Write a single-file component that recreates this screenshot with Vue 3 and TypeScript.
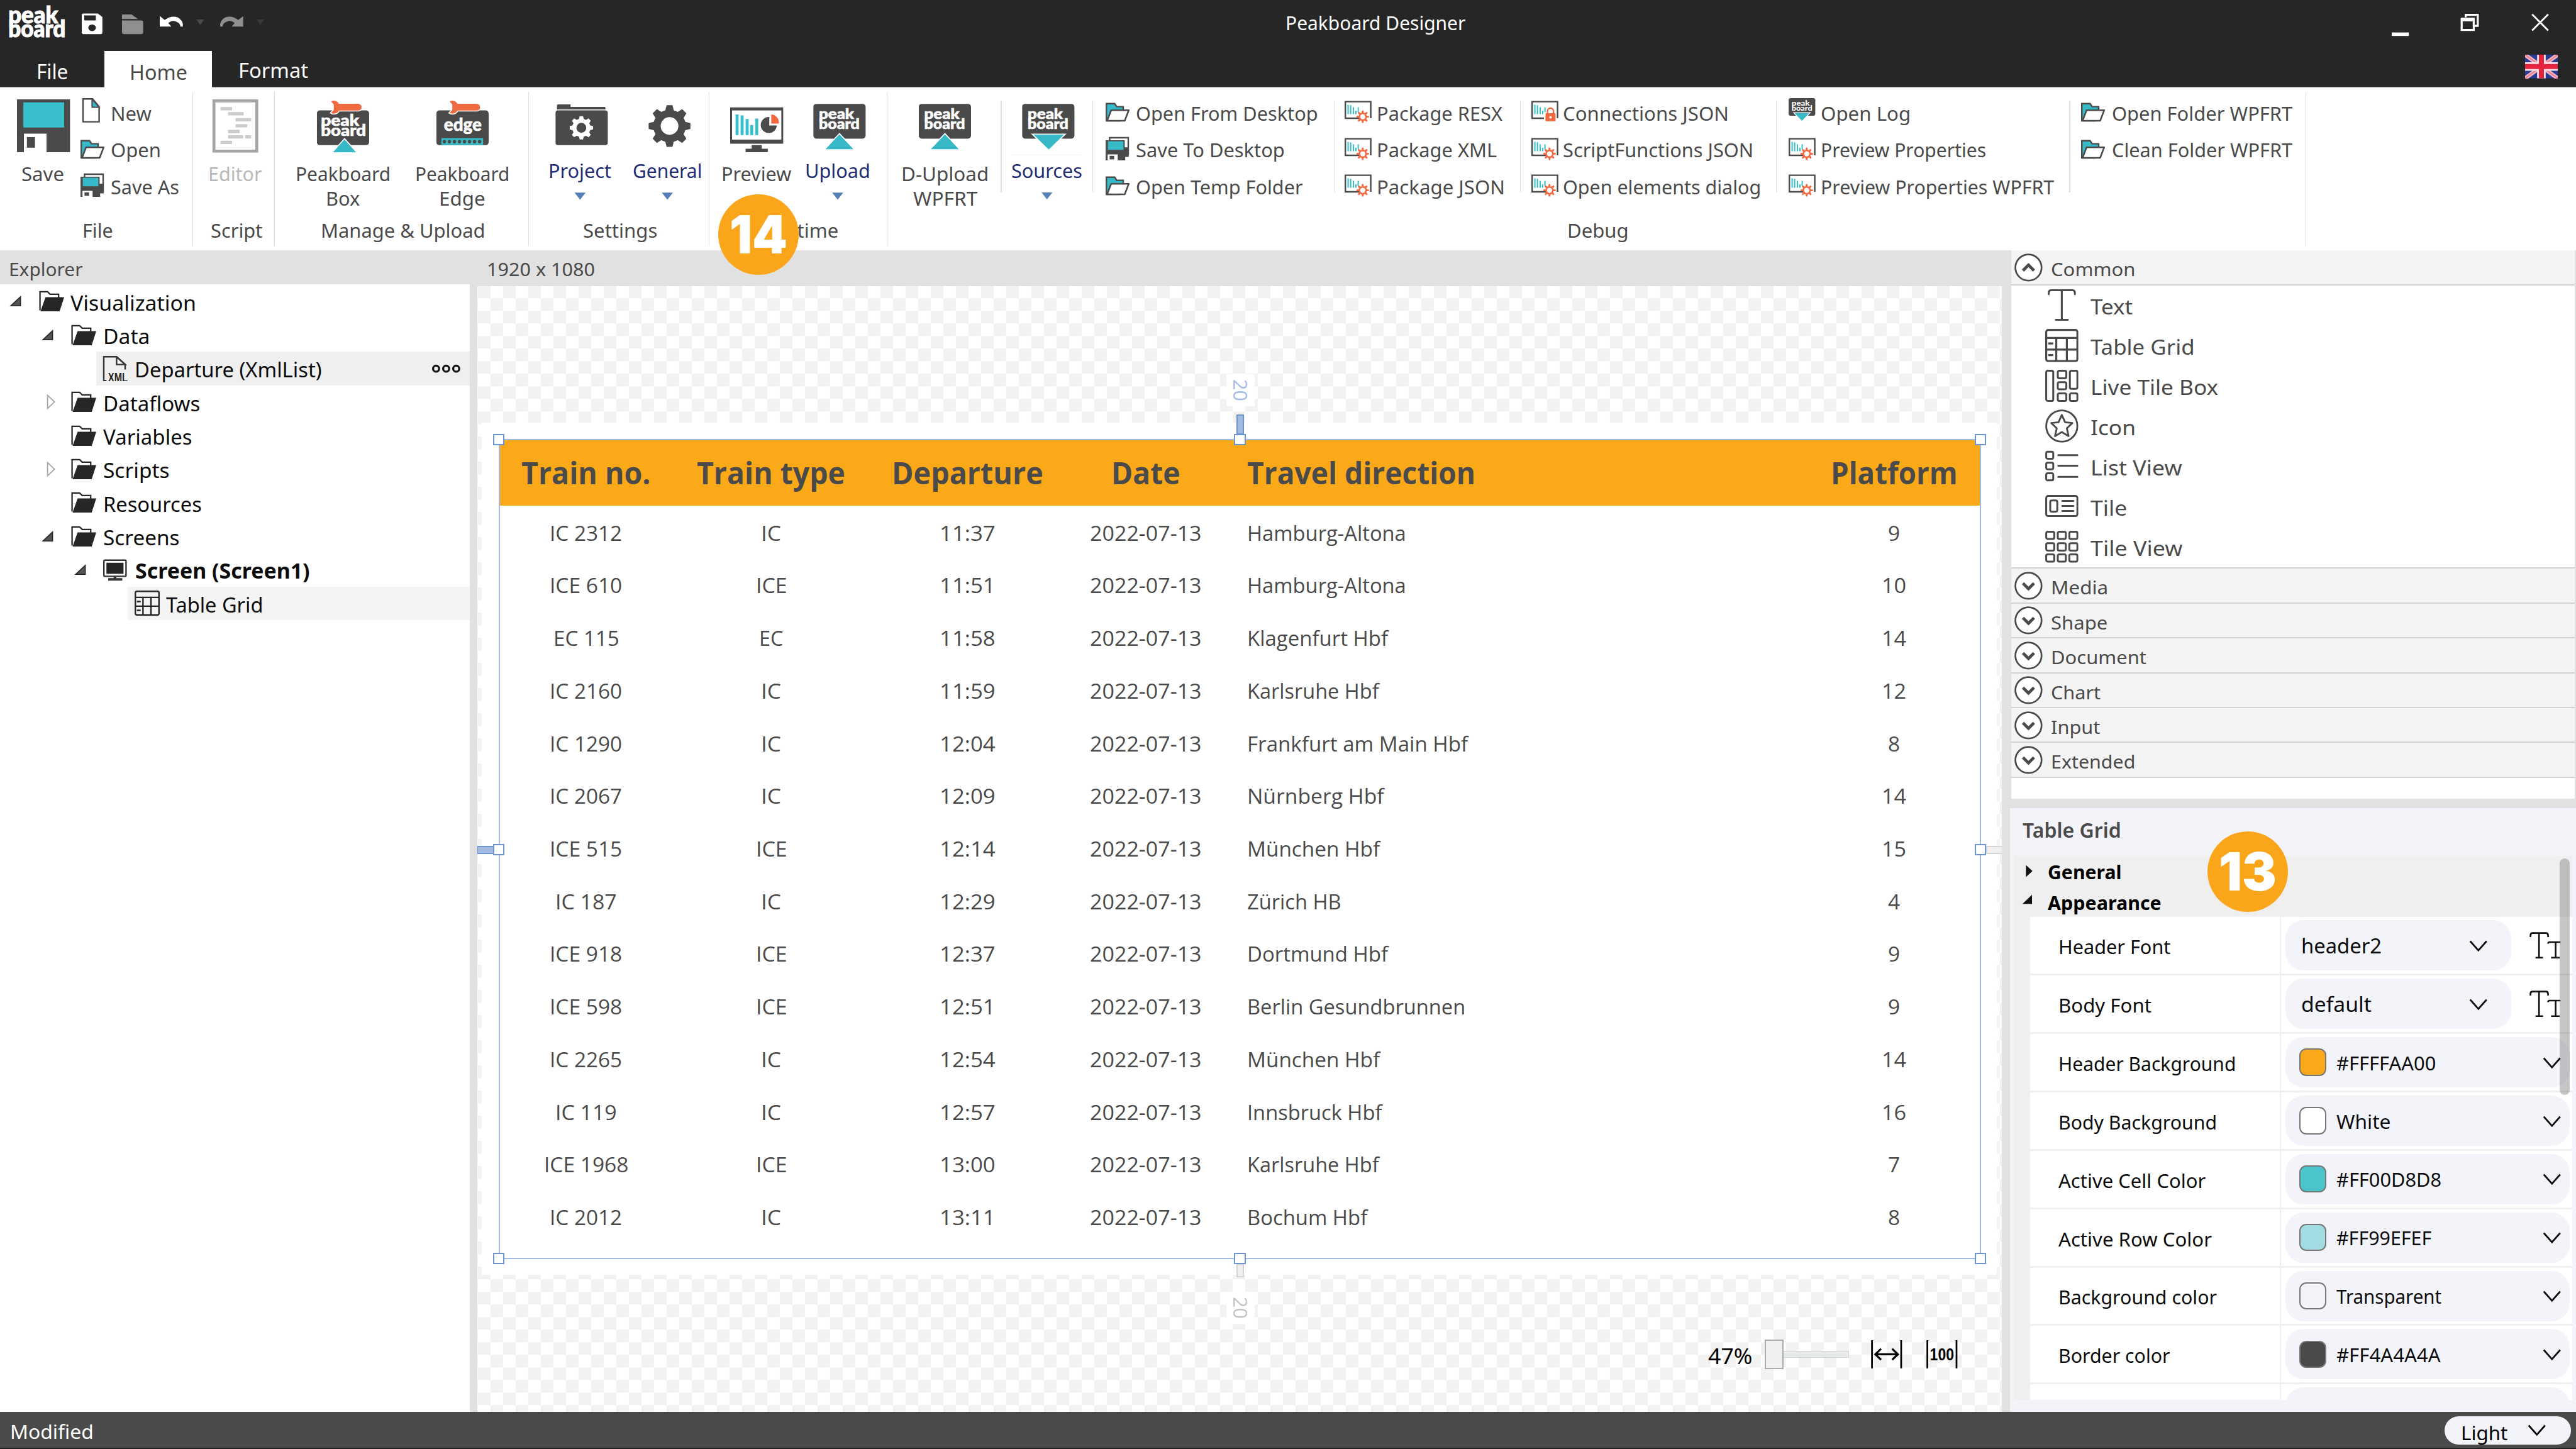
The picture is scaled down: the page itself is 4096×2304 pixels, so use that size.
<script setup lang="ts">
interface SmallItem { icon: string; text: string; w: number }
interface SmallColumn { left: number; width: number; gap: number; items: SmallItem[] }
interface TreeNode { indent: number; toggle: '' | 'open' | 'closed'; icon: string; text: string; w: number; bold?: boolean; shade?: string }
interface Prop { label: string; lw: number; value: string; vw: number; swatch?: string }

const vFit = {
  mounted(el: HTMLElement, binding: { value: number }) {
    el.style.width = 'max-content'
    const natural = el.getBoundingClientRect().width
    el.style.width = `${binding.value + 5}px`
    const target = el.getBoundingClientRect().width
    el.style.transform = `scaleX(${target / natural})`
  },
}

const fileItems: SmallItem[] = [
  { icon: 'new', text: 'New', w: 76 },
  { icon: 'folder', text: 'Open', w: 95 },
  { icon: 'saveas', text: 'Save As', w: 131 },
]

const debugColumns: SmallColumn[] = [
  { left: 24, width: 455, gap: 3, items: [
    { icon: 'folder', text: 'Open From Desktop', w: 357 },
    { icon: 'saveas', text: 'Save To Desktop', w: 291 },
    { icon: 'folder', text: 'Open Temp Folder', w: 327 },
  ] },
  { left: 18, width: 349, gap: 7, items: [
    { icon: 'package', text: 'Package RESX', w: 245 },
    { icon: 'package', text: 'Package XML', w: 234 },
    { icon: 'package', text: 'Package JSON', w: 250 },
  ] },
  { left: 21, width: 486, gap: 5, items: [
    { icon: 'lock', text: 'Connections JSON', w: 325 },
    { icon: 'package', text: 'ScriptFunctions JSON', w: 374 },
    { icon: 'package', text: 'Open elements dialog', w: 389 },
  ] },
  { left: 23, width: 558, gap: 6, items: [
    { icon: 'log', text: 'Open Log', w: 174 },
    { icon: 'package', text: 'Preview Properties', w: 324 },
    { icon: 'package', text: 'Preview Properties WPFRT', w: 459 },
  ] },
  { left: 22, width: 440, gap: 3, items: [
    { icon: 'folder', text: 'Open Folder WPFRT', w: 354 },
    { icon: 'folder', text: 'Clean Folder WPFRT', w: 354 },
  ] },
]

const tree: TreeNode[] = [
  { indent: 14, toggle: 'open', icon: 'treefolder', text: 'Visualization', w: 245 },
  { indent: 78, toggle: 'open', icon: 'treefolder', text: 'Data', w: 88 },
  { indent: 142, toggle: '', icon: 'xml', text: 'Departure (XmlList)', w: 367, shade: '#efefef' },
  { indent: 78, toggle: 'closed', icon: 'treefolder', text: 'Dataflows', w: 188 },
  { indent: 78, toggle: '', icon: 'treefolder', text: 'Variables', w: 172 },
  { indent: 78, toggle: 'closed', icon: 'treefolder', text: 'Scripts', w: 127 },
  { indent: 78, toggle: '', icon: 'treefolder', text: 'Resources', w: 191 },
  { indent: 78, toggle: 'open', icon: 'treefolder', text: 'Screens', w: 147 },
  { indent: 142, toggle: 'open', icon: 'monitor', text: 'Screen (Screen1)', w: 342, bold: true },
  { indent: 205, toggle: '', icon: 'grid', text: 'Table Grid', w: 188, shade: '#f4f4f4' },
]

const headers: [string, number][] = [
  ['Train no.', 252], ['Train type', 290], ['Departure', 296], ['Date', 132], ['Travel direction', 449], ['Platform', 247],
]

type Cell = [string, number]
const trips: [Cell, Cell, string, Cell, string][] = [
  [['IC 2312', 139], ['IC', 35], '11:37', ['Hamburg-Altona', 311], '9'],
  [['ICE 610', 139], ['ICE', 57], '11:51', ['Hamburg-Altona', 311], '10'],
  [['EC 115', 126], ['EC', 43], '11:58', ['Klagenfurt Hbf', 275], '14'],
  [['IC 2160', 139], ['IC', 35], '11:59', ['Karlsruhe Hbf', 257], '12'],
  [['IC 1290', 139], ['IC', 35], '12:04', ['Frankfurt am Main Hbf', 434], '8'],
  [['IC 2067', 139], ['IC', 35], '12:09', ['Nürnberg Hbf', 267], '14'],
  [['ICE 515', 139], ['ICE', 57], '12:14', ['München Hbf', 259], '15'],
  [['IC 187', 117], ['IC', 35], '12:29', ['Zürich HB', 182], '4'],
  [['ICE 918', 139], ['ICE', 57], '12:37', ['Dortmund Hbf', 275], '9'],
  [['ICE 598', 139], ['ICE', 57], '12:51', ['Berlin Gesundbrunnen', 429], '9'],
  [['IC 2265', 139], ['IC', 35], '12:54', ['München Hbf', 259], '14'],
  [['IC 119', 117], ['IC', 35], '12:57', ['Innsbruck Hbf', 263], '16'],
  [['ICE 1968', 163], ['ICE', 57], '13:00', ['Karlsruhe Hbf', 257], '7'],
  [['IC 2012', 139], ['IC', 35], '13:11', ['Bochum Hbf', 234], '8'],
]

const controls: SmallItem[] = [
  { icon: 'text', text: 'Text', w: 79 },
  { icon: 'grid', text: 'Table Grid', w: 202 },
  { icon: 'livetile', text: 'Live Tile Box', w: 249 },
  { icon: 'star', text: 'Icon', w: 85 },
  { icon: 'listview', text: 'List View', w: 177 },
  { icon: 'tile', text: 'Tile', w: 68 },
  { icon: 'tileview', text: 'Tile View', w: 178 },
]

const sections: [string, number][] = [
  ['Media', 109], ['Shape', 108], ['Document', 185], ['Chart', 94], ['Input', 93], ['Extended', 163],
]

const props: Prop[] = [
  { label: 'Header Font', lw: 218, value: 'header2', vw: 155 },
  { label: 'Body Font', lw: 180, value: 'default', vw: 135 },
  { label: 'Header Background', lw: 348, value: '#FFFFAA00', vw: 193, swatch: '#fba919' },
  { label: 'Body Background', lw: 310, value: 'White', vw: 103, swatch: '#ffffff' },
  { label: 'Active Cell Color', lw: 288, value: '#FF00D8D8', vw: 204, swatch: '#4bc4cb' },
  { label: 'Active Row Color', lw: 300, value: '#FF99EFEF', vw: 184, swatch: '#a2dbe2' },
  { label: 'Background color', lw: 310, value: 'Transparent', vw: 204, swatch: 'transparent' },
  { label: 'Border color', lw: 217, value: '#FF4A4A4A', vw: 202, swatch: '#4a4a4a' },
]

const handles = ['tl', 'tm', 'tr', 'ml', 'mr', 'bl', 'bm', 'br']
const angles = [0, 45, 90, 135, 180, 225, 270, 315]
</script>

<template>
  <div class="app">
    <svg class="defs" width="0" height="0">
      <symbol id="gear" viewBox="-43 -43 86 86">
        <circle r="25.5" fill="none" stroke="currentColor" stroke-width="15" />
        <path v-for="a in angles" :key="a" d="M-9-30L-6-42.500H6L9-30Z" fill="currentColor" :transform="`rotate(${a})`" />
      </symbol>
      <symbol id="smallgear" viewBox="-13 -13 26 26">
        <circle r="6.700" fill="#fff" stroke="#f4683f" stroke-width="3" />
        <path v-for="a in angles" :key="a" d="M-2.200-7.500L-1.500-12.500H1.500L2.200-7.500Z" fill="#f4683f" :transform="`rotate(${a})`" />
      </symbol>
      <symbol id="wrench" viewBox="0 0 76 32">
        <path d="M8 4C13 0 22 1 26 8H65A8 8 0 0 1 65 24H26C22 31 13 32 8 28L14 21V11Z" fill="#ef6a40" stroke="#fff" stroke-width="2" />
      </symbol>
      <symbol id="chev" viewBox="0 0 38 24">
        <path d="M2 2L19 21L36 2" fill="none" stroke="currentColor" stroke-width="3.600" />
      </symbol>

      <symbol id="big-save" viewBox="0 0 106 106">
        <path d="M0 0H106V105H59V68H14V105H0Z" fill="#4a4a4a" />
        <rect x="13" y="6" width="81" height="50" fill="#37c0cb" /><rect x="20" y="75" width="16" height="21" fill="#4a4a4a" />
      </symbol>
      <symbol id="big-editor" viewBox="0 0 106 106">
        <rect x="10.500" y="3" width="85" height="100" fill="#fff" stroke="#a6a6a6" stroke-width="6" />
        <path d="M23.500 18.500H46.500M38.500 28.500H69.500M53.500 40.500H84.500M53.500 52.500H76.500M38.500 64H61.500M38.500 74.500H68.500M72.500 74.500H84.500M23.500 85.500H46.500" stroke="#cbcbcb" stroke-width="6.500" />
      </symbol>
      <symbol id="big-box" viewBox="0 0 106 106">
        <rect y="22" width="104" height="69" rx="6" fill="#4a4a4a" />
        <use href="#wrench" x="18" y="0" width="76" height="31" />
        <g fill="#fff" stroke="#fff" stroke-width=".8" font-family="Lato, sans-serif" font-weight="900" font-size="30">
          <text x="8" y="52" textLength="76" lengthAdjust="spacingAndGlyphs">peak</text>
          <text x="8" y="73" textLength="90" lengthAdjust="spacingAndGlyphs">board</text>
        </g>
        <path d="M55 78L80 106H30Z" fill="#37b9c8" stroke="#fff" stroke-width="2" />
      </symbol>
      <symbol id="big-edge" viewBox="0 0 106 106">
        <rect y="22" width="104" height="69" rx="6" fill="#4a4a4a" />
        <use href="#wrench" x="16" y="0" width="76" height="31" />
        <text x="15" y="62" textLength="75" lengthAdjust="spacingAndGlyphs" fill="#fff" stroke="#fff" stroke-width=".8" font-family="Lato, sans-serif" font-weight="900" font-size="36">edge</text>
        <rect x="10" y="77" width="83" height="14" fill="#37b9c8" />
        <path d="M16 84H90" stroke="#4a4a4a" stroke-width="7" stroke-dasharray="0 10" stroke-linecap="round" />
      </symbol>
      <symbol id="big-project" viewBox="0 0 106 106">
        <path d="M3 20V12Q3 10 5 10H30V15H98Q99.500 15 99.500 20Z" fill="#4a4a4a" />
        <rect y="22" width="104" height="69" rx="5" fill="#4a4a4a" />
        <use href="#gear" x="28" y="33" width="47" height="47" color="#fff" />
      </symbol>
      <symbol id="big-general" viewBox="0 0 106 106">
        <use href="#gear" x="11" y="11" width="84" height="84" color="#4a4a4a" />
      </symbol>
      <symbol id="big-preview" viewBox="0 0 106 106">
        <path d="M0 16H106V88H0Z" fill="#4a4a4a" /><rect x="4" y="22" width="98" height="58" fill="#fff" />
        <path d="M43 91H63V98H75V105H31V98H43Z" fill="#4a4a4a" />
        <path d="M14 30V71M24 32V71M34 39V71M43 51V71M53 38V71" stroke="#37c0cb" stroke-width="6" />
        <path d="M78 35V52H93A16 16 0 1 1 78 35Z" fill="#4a4a4a" /><path d="M82 30A15.500 16 0 0 1 97 48H82Z" fill="#f4683f" />
      </symbol>
      <symbol id="plate" viewBox="0 0 106 106">
        <rect y="9" width="104" height="69" rx="6" fill="#4a4a4a" />
        <g fill="#fff" stroke="#fff" stroke-width=".8" font-family="Lato, sans-serif" font-weight="900" font-size="29">
          <text x="11" y="39" textLength="70" lengthAdjust="spacingAndGlyphs">peak</text>
          <text x="11" y="59" textLength="81" lengthAdjust="spacingAndGlyphs">board</text>
        </g>
      </symbol>
      <symbol id="big-upload" viewBox="0 0 106 106">
        <use href="#plate" width="106" height="106" /><path d="M52 68L82 100H22Z" fill="#37b9c8" stroke="#fff" stroke-width="2" />
      </symbol>
      <symbol id="big-sources" viewBox="0 0 106 106">
        <use href="#plate" width="106" height="106" /><path d="M20 69H86L53 101Z" fill="#37b9c8" stroke="#fff" stroke-width="2" />
      </symbol>

      <symbol id="sm-new" viewBox="0 0 56 56">
        <path d="M5 1.500H24L37 17V47H5Z" fill="#fff" stroke="#4a4a4a" stroke-width="3" /><path d="M23 2V18H37Z" fill="#37b9c8" stroke="#4a4a4a" stroke-width="2.500" />
      </symbol>
      <symbol id="sm-folder" viewBox="0 0 56 56">
        <path d="M1.500 45V11H18L22 17H35V27L28 45Z" fill="#37b9c8" stroke="#4a4a4a" stroke-width="3" />
        <path d="M11 24H46L38 45H3Z" fill="#fff" stroke="#4a4a4a" stroke-width="3.200" stroke-linejoin="round" />
      </symbol>
      <symbol id="sm-saveas" viewBox="0 0 56 56">
        <path d="M8 14V5H45V38H38" fill="#fff" stroke="#4a4a4a" stroke-width="3" />
        <path d="M0 10H38V24H46V43H39V50H24V38H4V50H0Z" fill="#4a4a4a" /><rect x="4.500" y="12" width="31" height="17" fill="#37b9c8" /><rect x="8" y="41" width="9" height="7" fill="#4a4a4a" />
      </symbol>
      <symbol id="frame" viewBox="0 0 56 56">
        <path d="M34 40H1.500V7H52V40" fill="#fff" stroke="#4a4a4a" stroke-width="3" />
        <path d="M7 13V32M12 14V32M17.500 18V32M22.500 25V32M27 18V28" stroke="#37c0cb" stroke-width="2.600" />
      </symbol>
      <symbol id="sm-package" viewBox="0 0 56 56">
        <use href="#frame" width="56" height="56" /><use href="#smallgear" x="23" y="24" width="26" height="26" />
      </symbol>
      <symbol id="sm-lock" viewBox="0 0 56 56">
        <use href="#frame" width="56" height="56" /><rect x="25" y="28" width="25" height="19" fill="#fff" />
        <path d="M32 31V26A6 6 0 0 1 44 26V31" fill="none" stroke="#ef6a40" stroke-width="3" /><rect x="28" y="30" width="20" height="16" rx="2" fill="#ef6a40" /><circle cx="38" cy="38" r="2.500" fill="#fff" />
      </symbol>
      <symbol id="sm-log" viewBox="0 0 56 56">
        <rect y="0" width="53" height="35" rx="4" fill="#4a4a4a" />
        <g fill="#fff" font-family="Lato, sans-serif" font-weight="900" font-size="14">
          <text x="6" y="15" textLength="36" lengthAdjust="spacingAndGlyphs">peak</text><text x="6" y="25" textLength="41" lengthAdjust="spacingAndGlyphs">board</text>
        </g>
        <path d="M10 29H43L26.500 46Z" fill="#37b9c8" stroke="#fff" stroke-width="1.500" />
      </symbol>

      <symbol id="tr-treefolder" viewBox="0 0 50 50">
        <path d="M2 43V6H17L22 11H39V18" fill="none" stroke="#262626" stroke-width="2.800" /><path d="M13 17H50L41 45H3Z" fill="#262626" />
      </symbol>
      <symbol id="tr-xml" viewBox="0 0 50 50">
        <path d="M8 49H2.500V1.500H28L45 17V27" fill="none" stroke="#333" stroke-width="3" /><path d="M28 2V17H45Z" fill="#fff" stroke="#333" stroke-width="3" />
        <text x="11" y="51" textLength="39" lengthAdjust="spacingAndGlyphs" fill="#262626" font-family="'Liberation Sans', sans-serif" font-weight="700" font-size="26">XML</text>
      </symbol>
      <symbol id="tr-monitor" viewBox="0 0 50 50">
        <rect x="1.500" y="6" width="44" height="32" rx="2" fill="none" stroke="#333" stroke-width="3" /><rect x="6.500" y="11" width="34" height="22" fill="#262626" />
        <path d="M23.500 38V42M10 44H38" stroke="#333" stroke-width="5" />
      </symbol>
      <symbol id="tr-grid" viewBox="0 0 66 66">
        <g fill="none" stroke="currentColor" stroke-width="4"><rect x="2" y="2" width="62" height="62" rx="4" /><path d="M2 18H64M2 41H64M22 18V64M43 18V64M6 29H16M6 52H16" /></g>
      </symbol>
      <symbol id="tr-text" viewBox="0 0 66 66">
        <path d="M7 11V8Q7 3 12 3H54Q59 3 59 8V11M33 3V62M21 62H45" fill="none" stroke="currentColor" stroke-width="3.800" stroke-linecap="round" />
      </symbol>
      <symbol id="tr-livetile" viewBox="0 0 66 66">
        <g fill="none" stroke="currentColor" stroke-width="3.800"><rect x="2" y="3" width="14" height="60" rx="3" /><rect x="25" y="3" width="17" height="15" rx="3" /><rect x="25" y="26" width="17" height="14" rx="3" /><rect x="25" y="48" width="17" height="15" rx="3" /><rect x="49" y="3" width="15" height="36" rx="3" /><rect x="49" y="48" width="15" height="15" rx="3" /></g>
      </symbol>
      <symbol id="tr-star" viewBox="0 0 66 66">
        <g fill="none" stroke="currentColor" stroke-width="3.600" stroke-linejoin="round"><circle cx="33" cy="33" r="31" /><path d="M33 11L39.500 25.500L54 27L43 37.500L46.500 53L33 45L19.500 53L23 37.500L12 27L26.500 25.500Z" /></g>
      </symbol>
      <symbol id="tr-listview" viewBox="0 0 66 66">
        <g fill="none" stroke="currentColor" stroke-width="3.800" stroke-linecap="round"><rect x="2" y="4" width="14" height="14" rx="3" /><rect x="2" y="26" width="14" height="13" rx="3" /><rect x="2" y="47" width="14" height="14" rx="3" /><path d="M26 11H64M26 32H64M26 54H64" /></g>
      </symbol>
      <symbol id="tr-tile" viewBox="0 0 66 66">
        <g fill="none" stroke="currentColor" stroke-width="3.800" stroke-linecap="round"><rect x="2" y="12" width="62" height="40" rx="4" /><rect x="10" y="21" width="14" height="22" rx="3" /><path d="M34 22H56M34 32H56M34 42H56" /></g>
      </symbol>
      <symbol id="tr-tileview" viewBox="0 0 66 66">
        <g fill="none" stroke="currentColor" stroke-width="3.800"><template v-for="y in [3, 26, 48]" :key="y"><rect v-for="x in [2, 25, 48]" :key="x" :x="x" :y="y" width="16" height="14.500" rx="3" /></template></g>
      </symbol>
      <symbol id="fonts" viewBox="0 0 62 54">
        <path d="M2 10V7Q2 2 6 2H33Q37 2 37 7V10M19 2V51M12 51H27M37 23Q37 20 40 20H62M52 20V51M43 51H60" fill="none" stroke="#111" stroke-width="3.300" />
      </symbol>
    </svg>

    <header class="titlebar">
      <svg class="logo" viewBox="0 0 114 66"><g fill="#fff" stroke="#fff" stroke-width="1.400" font-family="Lato, sans-serif" font-weight="900" font-size="48"><text x="-1" y="34" textLength="99" lengthAdjust="spacingAndGlyphs">peak</text><text x="-1" y="61" textLength="114" lengthAdjust="spacingAndGlyphs">board</text></g></svg>
      <svg class="quick" viewBox="0 0 380 50">
        <path fill-rule="evenodd" fill="#fff" d="M3 3H32L41 10V41Q41 44 38 44H3Q0 44 0 41V6Q0 3 3 3ZM5 7V17H28V7ZM20.500 25A7.500 6.500 0 1 0 20.600 25Z" />
        <path fill="#8f8f8f" d="M80 5H99L112 14H80ZM80 17H118Q122 17 122 20V41Q122 44 118 44H84Q80 44 80 41Z" />
        <path fill="#fff" d="M155 8V29H178L172 22Q181 15 189 20Q196 23 196 29H201Q202 17 191 11Q178 6 165 16Z" />
        <path fill="#4a4a4a" d="M228 15H243L235.500 26Z" />
        <path fill="#8f8f8f" d="M321 8V29H298L304 22Q295 15 287 20Q280 23 280 29H275Q274 17 285 11Q298 6 311 16Z" />
        <path fill="#3a3a3a" d="M348 15H362L355 26Z" />
      </svg>
      <div class="title"><span v-fit="353" class="t">Peakboard Designer</span></div>
      <svg class="winbtns" viewBox="0 0 316 60">
        <path d="M0 47H34V54H0Z" fill="#fff" /><g fill="none" stroke="#fff" stroke-width="4"><path d="M147 17V12H171V34H165" /><rect x="139" y="20" width="24" height="22" /><path d="M279 11L311 43M311 11L279 43" stroke-width="3.600" /></g><path d="M139 18H163V25H139Z" fill="#fff" />
      </svg>
    </header>
    <nav class="tabs">
      <span class="tab file"><span v-fit="58" class="t">File</span></span>
      <span class="tab home"><span v-fit="110" class="t">Home</span></span>
      <span class="tab format"><span v-fit="134" class="t">Format</span></span>
      <svg class="flag" viewBox="0 0 65 47"><rect width="65" height="47" fill="#283c94" /><path d="M0 0L65 47M65 0L0 47" stroke="#f3b6c0" stroke-width="8" /><path d="M0 0L65 47M65 0L0 47" stroke="#ee7d8e" stroke-width="2.500" /><path d="M32.500 0V47M0 23.500H65" stroke="#fbe3e7" stroke-width="17" /><path d="M32.500 0V47M0 23.500H65" stroke="#e5233f" stroke-width="10" /></svg>
    </nav>

    <section class="ribbon">
      <div class="group" style="width: 384px">
        <div class="gbody">
          <div class="big" style="margin-left: 10px; width: 150px"><svg><use href="#big-save" /></svg><span v-fit="80" class="t">Save</span></div>
          <div class="smalls"><div v-for="it in fileItems" :key="it.text" class="small"><svg><use :href="`#sm-${it.icon}`" /></svg><span v-fit="it.w" class="t">{{ it.text }}</span></div></div>
        </div>
        <div class="glabel"><span v-fit="56" class="t">File</span></div>
      </div>
      <div class="group" style="width: 162px; padding-left: 5px">
        <div class="gbody"><div class="big muted" style="width: 156px"><svg><use href="#big-editor" /></svg><span v-fit="102" class="t">Editor</span></div></div>
        <div class="glabel"><span v-fit="98" class="t">Script</span></div>
      </div>
      <div class="group" style="width: 505px">
        <div class="gbody">
          <div class="big" style="margin-left: 16px; width: 239px"><svg><use href="#big-box" /></svg><span v-fit="184" class="t">Peakboard</span><span v-fit="63" class="t">Box</span></div>
          <div class="big" style="width: 236px"><svg><use href="#big-edge" /></svg><span v-fit="183" class="t">Peakboard</span><span v-fit="87" class="t">Edge</span></div>
        </div>
        <div class="glabel"><span v-fit="322" class="t">Manage &amp; Upload</span></div>
      </div>
      <div class="group" style="width: 359px">
        <div class="gbody">
          <div class="big drop" style="margin-left: 18px; width: 168px"><svg><use href="#big-project" /></svg><span v-fit="120" class="t">Project</span><i class="arrow" /></div>
          <div class="big drop" style="margin-left: 6px; width: 167px"><svg><use href="#big-general" /></svg><span v-fit="133" class="t">General</span><i class="arrow" /></div>
        </div>
        <div class="glabel"><span v-fit="143" class="t">Settings</span></div>
      </div>
      <div class="group" style="width: 354px">
        <div class="gbody">
          <div class="big" style="margin-left: 10px; width: 166px"><svg><use href="#big-preview" /></svg><span v-fit="134" class="t">Preview</span></div>
          <div class="big drop" style="margin-left: 4px; width: 150px"><svg><use href="#big-upload" /></svg><span v-fit="125" class="t">Upload</span><i class="arrow" /></div>
        </div>
        <div class="glabel"><span v-fit="149" class="t">Runtime</span></div>
        <b class="badge b14"><span v-fit="110" class="t">14</span></b>
      </div>
      <div class="group" style="width: 2820px">
        <div class="gbody">
          <div class="big" style="margin-left: 7px; width: 215px"><svg><use href="#big-upload" /></svg><span v-fit="169" class="t">D-Upload</span><span v-fit="123" class="t">WPFRT</span></div>
          <i class="sep" style="margin-left: 3px" />
          <div class="big drop underline" style="margin-left: 5px; width: 170px"><svg><use href="#big-sources" /></svg><span v-fit="136" class="t">Sources</span><i class="arrow" /></div>
          <i class="sep" style="margin-left: 5px" />
          <template v-for="(c, i) in debugColumns" :key="i">
            <div class="smalls" :style="{ marginLeft: `${c.left}px`, width: `${c.width}px` }">
              <div v-for="it in c.items" :key="it.text" class="small" :style="{ gap: `${c.gap}px` }"><svg><use :href="`#sm-${it.icon}`" /></svg><span v-fit="it.w" class="t">{{ it.text }}</span></div>
            </div>
            <i v-if="i < 4" class="sep" />
          </template>
        </div>
        <div class="glabel"><span v-fit="117" class="t">Debug</span></div>
      </div>
    </section>

    <main class="work">
      <aside class="explorer">
        <div class="panehead"><span v-fit="142" class="t">Explorer</span></div>
        <div v-for="(n, i) in tree" :key="i" class="node">
          <span class="indent" :style="{ width: `${n.indent}px` }" />
          <span class="cell" :style="{ background: n.shade }" :class="{ shaded: n.shade }">
            <svg v-if="!n.shade" class="toggle" viewBox="0 0 49 50">
              <path v-if="n.toggle === 'open'" d="M8 34L27 16V34Z" fill="#555" stroke="#262626" stroke-width="2" />
              <path v-if="n.toggle === 'closed'" d="M17 12V38L31 25Z" fill="#fff" stroke="#a6a6a6" stroke-width="2.200" />
            </svg>
            <svg class="ticon"><use :href="`#tr-${n.icon}`" /></svg>
            <span v-fit="n.w" class="t" :class="{ bold: n.bold }">{{ n.text }}</span>
            <svg v-if="n.icon === 'xml'" class="dots" viewBox="0 0 56 18"><g fill="none" stroke="#111" stroke-width="4"><circle cx="8" cy="9" r="6" /><circle cx="28" cy="9" r="6" /><circle cx="48" cy="9" r="6" /></g></svg>
          </span>
        </div>
      </aside>
      <i class="splitter left" />
      <section class="canvas">
        <div class="panehead canvashead"><span v-fit="210" class="t">1920 x 1080</span></div>
        <div class="stage">
          <div class="screen">
            <div class="table">
              <div class="thead"><span v-for="(h, i) in headers" :key="h[0]" class="col" :class="`c${i}`"><span v-fit="h[1]" class="t">{{ h[0] }}</span></span></div>
              <div v-for="(r, i) in trips" :key="i" class="trow">
                <span class="col c0"><span v-fit="r[0][1]" class="t">{{ r[0][0] }}</span></span>
                <span class="col c1"><span v-fit="r[1][1]" class="t">{{ r[1][0] }}</span></span>
                <span class="col c2"><span v-fit="106" class="t">{{ r[2] }}</span></span>
                <span class="col c3"><span v-fit="217" class="t">2022-07-13</span></span>
                <span class="col c4"><span v-fit="r[3][1]" class="t">{{ r[3][0] }}</span></span>
                <span class="col c5"><span v-fit="r[4].length > 1 ? 44 : 19" class="t">{{ r[4] }}</span></span>
              </div>
              <i class="outline" />
              <i class="link ltop" /><i class="link lleft" /><i class="link lright" /><i class="link lbottom" />
              <i v-for="h in handles" :key="h" class="handle" :class="h" />
              <span class="dist dtop">20</span><span class="dist dbottom">20</span>
            </div>
          </div>
          <div class="zoombar">
            <span v-fit="83" class="t pct">47%</span>
            <span class="slider"><i class="thumb" /><i class="track" /></span>
            <svg class="fitw" viewBox="0 0 62 56"><path d="M2 0V56M60 0V56" stroke="#000" stroke-width="3.400" /><path d="M8 28H54M20 17L8.500 28L20 39M42 17L53.500 28L42 39" fill="none" stroke="#000" stroke-width="4" /></svg>
            <svg class="fitw hundred" viewBox="0 0 62 56"><path d="M2 0V56M60 0V56" stroke="#000" stroke-width="3.400" /><text x="7" y="40.500" textLength="48" lengthAdjust="spacingAndGlyphs" font-family="'Liberation Sans', sans-serif" font-weight="700" font-size="34">100</text></svg>
          </div>
        </div>
      </section>
      <i class="splitter" />
      <aside class="right">
        <div class="toolbox">
          <div class="sect"><svg class="circ" viewBox="0 0 56 56"><circle cx="28" cy="28" r="26" fill="#fff" stroke="#4a4a4a" stroke-width="3.400" /><path d="M17 34L28 23L39 34" fill="none" stroke="#4a4a4a" stroke-width="6" /></svg><span v-fit="163" class="t">Common</span></div>
          <div class="items"><div v-for="c in controls" :key="c.text" class="item"><svg><use :href="`#tr-${c.icon}`" /></svg><span v-fit="c.w" class="t">{{ c.text }}</span></div></div>
          <div v-for="s in sections" :key="s[0]" class="sect"><svg class="circ" viewBox="0 0 56 56"><circle cx="28" cy="28" r="26" fill="#fff" stroke="#4a4a4a" stroke-width="3.400" /><path d="M17 23L28 34L39 23" fill="none" stroke="#4a4a4a" stroke-width="6" /></svg><span v-fit="s[1]" class="t">{{ s[0] }}</span></div>
        </div>
        <div class="props">
          <div class="ptitle"><span v-fit="191" class="t">Table Grid</span></div>
          <div class="plist">
            <div class="pgroup"><svg viewBox="0 0 30 30"><path d="M8 3V27L21 15Z" fill="#111" /></svg><span v-fit="142" class="t">General</span></div>
            <div class="pgroup"><svg viewBox="0 0 30 30"><path d="M1 19H20V1Z" fill="#111" /></svg><span v-fit="221" class="t">Appearance</span></div>
            <div v-for="p in props" :key="p.label" class="prow">
              <span class="plabel"><span v-fit="p.lw" class="t">{{ p.label }}</span></span>
              <span class="pvalue">
                <span class="pill" :class="{ wide: p.swatch }">
                  <i v-if="p.swatch" class="swatch" :style="{ background: p.swatch }" />
                  <span v-fit="p.vw" class="t" :class="{ large: !p.swatch }">{{ p.value }}</span>
                  <svg class="chev"><use href="#chev" /></svg>
                </span>
                <svg v-if="!p.swatch" class="fonts"><use href="#fonts" /></svg>
              </span>
            </div>
            <div class="prow"><span class="plabel" /><span class="pvalue"><span class="pill wide" /></span></div>
            <i class="scroll" />
          </div>
          <b class="badge b13"><span v-fit="110" class="t">13</span></b>
        </div>
      </aside>
    </main>

    <footer class="status">
      <span v-fit="161" class="t">Modified</span>
      <span class="theme"><span v-fit="88" class="t">Light</span><svg class="chev"><use href="#chev" /></svg></span>
    </footer>
  </div>
</template>

<style>
html, body { margin: 0; overflow: hidden; }
</style>

<style scoped>
.app { zoom: 0.8; width: 5120px; height: 2880px; overflow: hidden; display: flex; flex-direction: column; font-family: "Noto Sans", "Open Sans", sans-serif; font-size: 39px; color: #4a4a4a; background: #fff; }
.app * { box-sizing: border-box; }
.defs { position: absolute; }
svg { display: block; flex: none; overflow: visible; }
i { display: block; flex: none; }
.t { position: relative; left: 1.500px; top: 1.500px; display: inline-block; flex: none; white-space: nowrap; transform-origin: 0 50%; text-align: left; }
.bold { font-weight: 700; }

.titlebar { height: 101px; flex: none; background: #262626; color: #fff; display: flex; }
.logo { width: 114px; height: 66px; margin: 12px 0 0 18px; }
.quick { width: 380px; height: 50px; margin: 24px 0 0 30px; }
.title { margin-left: 2012px; height: 88px; line-height: 88px; }
.winbtns { width: 316px; height: 60px; margin: 17px 50px 0 auto; }
.tabs { height: 73px; flex: none; background: #262626; color: #fff; display: flex; border-bottom: 2px solid #777; }
.tab { height: 73px; line-height: 80px; }
.tab .t { font-size: 40px; left: 0; }
.file { width: 208px; padding-left: 72px; }
.home { width: 213px; padding-left: 50px; background: #fff; color: #4a4a4a; line-height: 82px; }
.format { padding-left: 53px; line-height: 76px; }
.flag { width: 65px; height: 47px; margin: 8px 36px 0 auto; overflow: hidden; }

.ribbon { height: 324px; flex: none; display: flex; padding-top: 9px; background: #fff; }
.group { position: relative; height: 306px; border-right: 2px solid #dedede; flex: none; }
.gbody { height: 252px; display: flex; align-items: flex-start; }
.glabel { height: 44px; line-height: 44px; display: flex; justify-content: center; }
.glabel .t { left: 3px; }
.big { flex: none; display: flex; flex-direction: column; align-items: center; line-height: 48px; }
.big .t { left: 0; }
.big svg { width: 106px; height: 106px; margin: 14px 0 17px; transform: translateX(1px); }
.big.drop { color: #232c70; }
.big.drop svg { margin: 14px 0 11px; transform: translateX(4px); }
.big.underline svg { margin-bottom: 3px; }
.big.underline .t { border-top: 2px solid #f0f2fa; padding-top: 6px; }
.muted { color: #b8b8b8; }
.arrow { width: 22px; height: 14px; margin-top: 21px; background: #5580b8; clip-path: polygon(0 0, 100% 0, 50% 100%); }
.sep { width: 2px; height: 182px; margin-top: 17px; background: #dedede; }
.smalls { padding-top: 4px; flex: none; }
.small { height: 73px; display: flex; align-items: center; gap: 3px; }
.small svg { width: 56px; height: 56px; }

.badge { position: absolute; z-index: 3; width: 160px; height: 160px; border-radius: 50%; background: #fba51a; color: #fff; font: 900 105px/160px Inter, sans-serif; display: flex; justify-content: center; }
.badge .t { left: 0; top: 0; }
.b14 { left: 17px; top: 203px; }
.b13 { left: 392px; top: 47px; }

.work { height: 2308px; flex: none; display: flex; }
.explorer { width: 934px; flex: none; color: #0c0c0c; }
.panehead { height: 67px; line-height: 69px; background: #e1e1e1; color: #4a4a4a; padding-left: 16px; font-size: 37px; }
.panehead .t { left: 2px; }
.node { height: 66.670px; display: flex; font-size: 42px; position: relative; top: 1px; }
.indent { flex: none; }
.cell { flex: 1; display: flex; align-items: center; }
.cell.shaded { margin-left: 49px; padding-left: 13px; }
.cell.shaded .ticon { margin-left: 0; }
.toggle { width: 49px; height: 50px; }
.ticon { width: 50px; height: 50px; margin-left: 14px; color: #262626; }
.cell .t { margin-left: 12px; }
.dots { width: 56px; height: 18px; margin-left: auto; margin-right: 19px; }
.splitter { width: 16px; background: #e1e1e1; }
.splitter.left { width: 15px; }

.canvas { width: 3030px; flex: none; display: flex; flex-direction: column; }
.canvashead { height: 71px; flex: none; padding-left: 16px; }
.stage { flex: 1; position: relative; overflow: hidden; background: conic-gradient(#f2f2f2 25%, #fff 0 50%, #f2f2f2 0 75%, #fff 0) 26px -1px / 50px 50px; }
.screen { margin: 271px 0 0 9px; width: 3011px; height: 1694px; background: #fff; padding: 33px 0 0 34px; }
.table { position: relative; width: 2945px; height: 1629px; font-family: "Open Sans", sans-serif; color: #4a4a4a; }
.table .t { left: 0; top: 0; }
.thead { height: 132px; margin: 0 1px 1px 2px; background: #fba919; display: flex; font-size: 60px; font-weight: 700; }
.trow { height: 104.670px; margin-left: 2px; display: flex; font-size: 42px; }
.col { display: flex; align-items: center; justify-content: center; flex: none; }
.c0 { width: 342px; }
.c1 { width: 394px; }
.c2 { width: 386px; }
.c3 { width: 322px; }
.c4 { width: 1156px; padding-left: 41px; justify-content: flex-start; }
.c5 { width: 342px; }
.outline { position: absolute; inset: -1px; border: 3px solid #a3bbe3; }
.handle { position: absolute; width: 23px; height: 23px; margin: -12px; background: #fff; border: 2.500px solid #6f95d0; }
.tl { left: 0; top: 1px; }
.tm { left: 1473px; top: 1px; }
.tr { left: 2945px; top: 1px; }
.ml { left: 0; top: 816px; }
.mr { left: 2945px; top: 816px; }
.bl { left: 0; top: 1629px; }
.bm { left: 1473px; top: 1629px; }
.br { left: 2945px; top: 1629px; }
.link { position: absolute; background: #a3bbe0; border: 2.500px solid #6f95d0; }
.ltop { left: 1465px; top: -49px; width: 16px; height: 40px; }
.lleft { left: -44px; top: 808px; width: 34px; height: 16px; }
.lright { left: 2955px; top: 808px; width: 40px; height: 16px; background: #f0f0f0; border-color: #d5d5d5; }
.lbottom { left: 1465px; top: 1640px; width: 16px; height: 26px; background: #f0f0f0; border-color: #d5d5d5; }
.dist { position: absolute; left: 1446px; width: 56px; height: 64px; line-height: 46px; writing-mode: vertical-rl; text-align: center; padding-right: 7px; background: #fff; color: #a3bbe3; font-size: 38px; font-weight: 400; }
.dtop { top: -129px; }
.dbottom { top: 1694px; color: #c4c4c4; }

.zoombar { position: absolute; left: 2445px; bottom: 81px; height: 66px; display: flex; align-items: center; color: #000; }
.pct { font-size: 44px; }
.slider { display: flex; align-items: center; margin-left: 26px; }
.thumb { width: 37px; height: 59px; background: #f0f0f0; border: 3px solid #acacac; }
.track { width: 130px; height: 13px; background: #e7eaea; border: 2px solid #d6d6d6; border-left: 0; }
.fitw { width: 62px; height: 56px; margin-left: 44px; }
.hundred { margin-left: 48px; }

.right { width: 1125px; flex: none; background: #e1e1e1; }
.toolbox { height: 1089px; margin: 0 3px 0 2px; background: #fff; }
.sect { height: 69.300px; display: flex; align-items: center; background: #f4f4f4; border-bottom: 3px solid #d2d2d2; padding: 1px 0 0 7px; font-size: 36px; }
.circ { width: 56px; height: 56px; margin-right: 15px; }
.sect .t { top: 3px; }
.items { height: 563px; border-bottom: 3px solid #d2d2d2; }
.item { height: 80px; display: flex; align-items: center; padding-left: 68px; font-size: 42px; }
.item svg { width: 66px; height: 66px; margin-right: 22px; }
.props { position: relative; height: 1200px; margin-top: 19px; background: #f2f4fa; padding: 0 8px 0 7px; }
.ptitle { height: 95px; line-height: 84px; padding-left: 17px; font-size: 40px; font-weight: 600; }
.plist { position: relative; height: 1082px; overflow: hidden; background: #efefef; }
.pgroup { height: 61px; display: flex; align-items: center; font-weight: 700; color: #000; }
.pgroup svg { width: 30px; height: 30px; margin: 0 19px 0 17px; }
.prow { height: 116.100px; margin-left: 33px; display: flex; background: #fff; border-bottom: 4px solid #efefef; color: #0c0c0c; font-size: 38px; }
.plabel { width: 499px; flex: none; border-right: 3px solid #efefef; padding-left: 55px; display: flex; align-items: center; }
.plabel .t { top: 3px; }
.pvalue { padding-left: 8px; display: flex; align-items: center; }
.pill { position: relative; width: 449px; height: 100px; border-radius: 36px; background: #f2f4fa; display: flex; align-items: center; padding: 0 47px 0 30px; }
.pill.wide { width: 566px; padding: 0 17px 0 28px; }
.pill .t.large { font-size: 42px; top: 0; }
.pill .chev { margin-left: auto; position: relative; top: 1px; }
.chev { width: 37px; height: 23px; }
.swatch { width: 54px; height: 54px; border: 3px solid #777; border-radius: 14px; margin-right: 18px; }
.fonts { width: 62px; height: 54px; margin-left: 36px; }
.scroll { position: absolute; left: 1086px; top: 5px; width: 19px; height: 470px; border-radius: 10px; background: rgba(120, 120, 120, 0.42); }

.status { height: 74px; flex: none; background: #4a4a4a; border-bottom: 3px solid #222; color: #fff; display: flex; align-items: center; justify-content: space-between; padding: 3px 10px 0 18px; }
.theme { width: 251px; height: 57px; border-radius: 28px; background: #f2f4fa; color: #000; display: flex; align-items: center; padding-left: 31px; overflow: hidden; }
.theme .t { top: 4px; }
.theme .chev { margin-left: 41px; }
</style>
